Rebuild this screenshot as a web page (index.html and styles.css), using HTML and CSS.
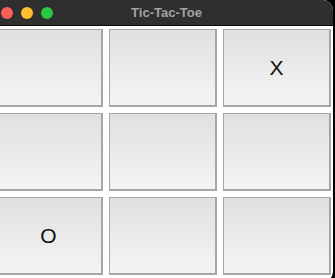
FILE: index.html
```html
<!DOCTYPE html>
<html lang="en">

<head>
    <meta charset="UTF-8">
    <title>Tic-Tac-Toe</title>
    <link rel="stylesheet" href="styles.css">
</head>

<body>

    <div class="window">
        <div class="titlebar">
            <span class="light red"></span>
            <span class="light yellow"></span>
            <span class="light green"></span>
            <span class="title">Tic-Tac-Toe</span>
        </div>

        <div class="board">
            <button class="cell"></button>
            <button class="cell"></button>
            <button class="cell">X</button>
            <button class="cell"></button>
            <button class="cell"></button>
            <button class="cell"></button>
            <button class="cell">O</button>
            <button class="cell"></button>
            <button class="cell"></button>
        </div>
    </div>

</body>

</html>
```

FILE: styles.css
```css
html,
body {
    margin: 0;
    background: #000;
    overflow: hidden;
}

.window {
    width: 333px;
    height: 283px;
    background: #fff;
    border-radius: 0 10px 12px 0;
    overflow: hidden;
}

.titlebar {
    position: relative;
    height: 25px;
    background: #2f2f2f;
    border-bottom: 1px solid #0a0a0a;
    display: flex;
    align-items: center;
    gap: 8px;
    padding-left: 1px;
}

.light {
    width: 12px;
    height: 12px;
    border-radius: 50%;
}

.red { background: #fe5f57; }
.yellow { background: #febc2e; }
.green { background: #28c840; }

.title {
    position: absolute;
    left: 0;
    right: 0;
    top: 0;
    line-height: 25px;
    text-align: center;
    font-family: "Liberation Sans", Arial, sans-serif;
    font-weight: bold;
    font-size: 13px;
    color: #a3a3a3;
}

.board {
    display: grid;
    grid-template-columns: repeat(3, 108px);
    grid-auto-rows: 78px;
    gap: 6px;
    margin-left: -5px;
    padding-top: 3px;
}

.cell {
    margin: 0;
    padding: 0;
    border: 1px solid #a6a6a6;
    border-width: 1px 2px 2px 1px;
    background: linear-gradient(#e0e0e0, #f4f4f4);
    font-family: "Liberation Sans", Arial, sans-serif;
    font-size: 21px;
    color: #111;
}
```
